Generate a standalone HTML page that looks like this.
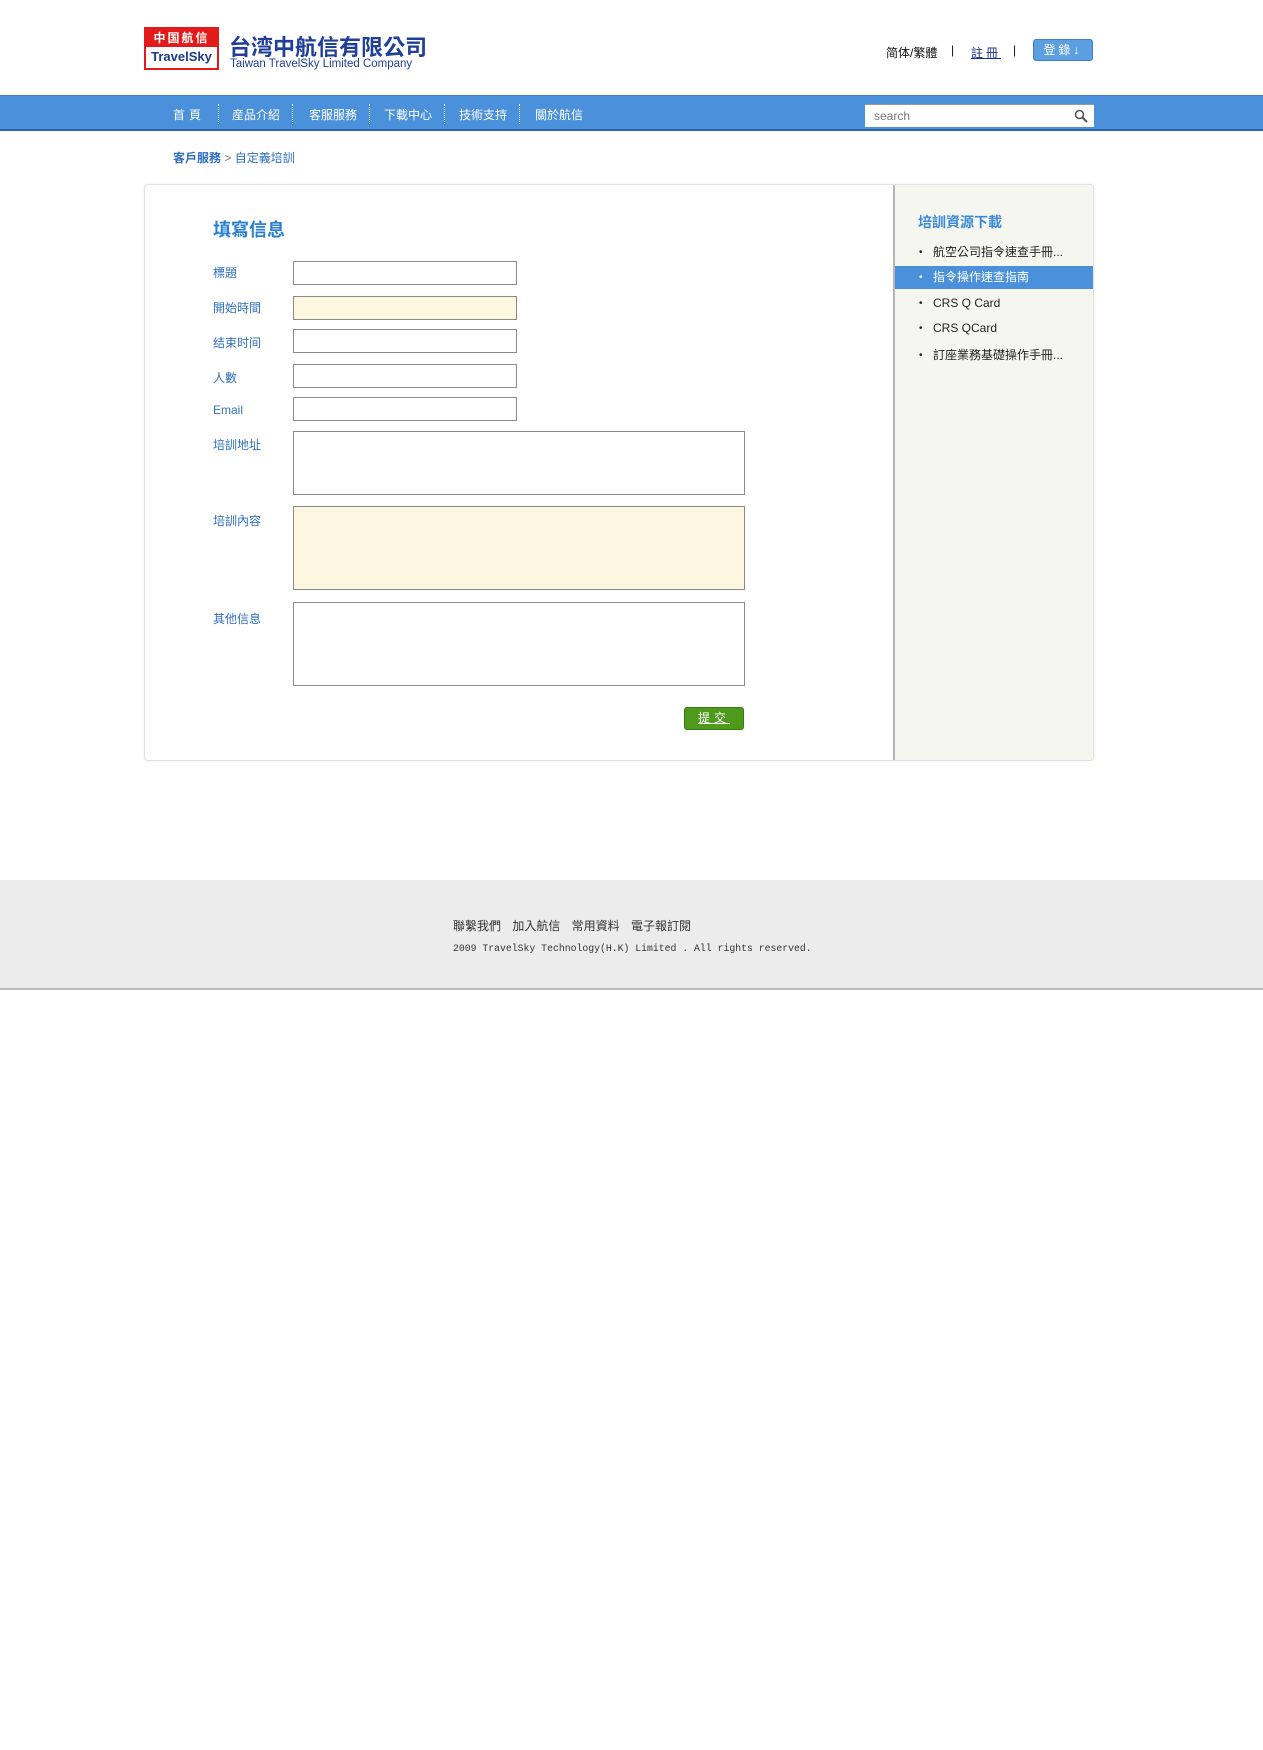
<!DOCTYPE html>
<html><head><meta charset="utf-8">
<style>
*{margin:0;padding:0;box-sizing:border-box}
body{width:1263px;height:1750px;background:#fff;font-family:"Liberation Sans","Noto Sans CJK TC",sans-serif;position:relative;overflow:hidden}
.a{position:absolute;white-space:nowrap}
.nav{position:absolute;left:0;top:95px;width:1263px;height:36px;background:#4a90da;border-bottom:2px solid #2a62a8;border-top:1px solid #3b7fcc}
.nav span{position:absolute;top:10px;color:#fff;font-size:12px}
.dv{position:absolute;top:8px;height:20px;border-left:1px dotted #e6f0fb}
.inp{position:absolute;border:1px solid #8a8a8a;background:#fff}
.lab{position:absolute;left:213px;color:#2f6fbf;font-size:12px}
.side li{list-style:none;position:absolute;left:895px;width:198px;height:23px;font-size:12px;color:#222;line-height:23px;padding-left:38px}
.side li:before{content:"•";position:absolute;left:24px;font-size:10px}
</style></head><body>
<div class="a" style="left:144px;top:27px;width:75px;height:43px;border:2px solid #e21a1a;background:#fff">
 <div style="background:#e21a1a;height:18px;color:#fff;font-size:12px;font-weight:bold;text-align:center;line-height:18px;letter-spacing:2px">中国航信</div>
 <div style="color:#1a3a8a;font-size:13px;font-weight:bold;text-align:center;line-height:20px">TravelSky</div>
</div>
<div class="a" style="left:229px;top:30px;font-size:22px;font-weight:bold;color:#1f3f9a">台湾中航信有限公司</div>
<div class="a" style="left:230px;top:58px;font-size:11.5px;color:#1f3f9a">Taiwan TravelSky Limited Company</div>
<div class="a" style="left:886px;top:44px;font-size:12px;color:#111">简体/繁體</div>
<div class="a" style="left:951px;top:43px;font-size:12px;color:#111">|</div>
<div class="a" style="left:971px;top:44px;font-size:12px;color:#1a2f8a;text-decoration:underline;letter-spacing:3px">註冊</div>
<div class="a" style="left:1013px;top:43px;font-size:12px;color:#111">|</div>
<div class="a" style="left:1033px;top:39px;width:60px;height:22px;background:#5b9fe0;border:1px solid #3f7fc6;border-radius:3px;color:#fff;font-size:12px;text-align:center;line-height:20px;letter-spacing:3px">登錄↓</div>
<div class="nav">
 <span style="left:173px;letter-spacing:4px">首頁</span><i class="dv" style="left:218px"></i>
 <span style="left:232px">産品介紹</span><i class="dv" style="left:292px"></i>
 <span style="left:309px">客服服務</span><i class="dv" style="left:369px"></i>
 <span style="left:384px">下載中心</span><i class="dv" style="left:444px"></i>
 <span style="left:459px">技術支持</span><i class="dv" style="left:519px"></i>
 <span style="left:535px">關於航信</span>
 <div style="position:absolute;left:865px;top:8px;width:229px;height:23px;background:#fff;border-top:1px solid #999"><span style="left:9px;top:4px;color:#777;font-size:12px">search</span>
 <svg style="position:absolute;right:6px;top:4px" width="14" height="14"><circle cx="5.5" cy="5.5" r="4" fill="none" stroke="#555" stroke-width="1.6"/><path d="M8.5 8.5L13 13" stroke="#555" stroke-width="2"/></svg></div>
</div>
<div class="a" style="left:173px;top:149px;font-size:12px;color:#2f6fbf"><b>客戶服務</b> <span style="color:#777">&gt;</span> 自定義培訓</div>
<div class="a" style="left:144px;top:184px;width:950px;height:577px;border:1px solid #e2e2e2;border-radius:4px;background:#fff;box-shadow:0 0 3px #eee"></div>
<div class="a" style="left:893px;top:185px;width:200px;height:575px;background:#f6f6f1;border-left:2px solid #b5b5b5;border-radius:0 4px 4px 0"></div>
<div class="a" style="left:213px;top:216px;font-size:18px;font-weight:bold;color:#2a7fd0">填寫信息</div>
<div class="lab" style="top:264px">標題</div>
<div class="lab" style="top:299px">開始時間</div>
<div class="lab" style="top:334px">结束时间</div>
<div class="lab" style="top:369px">人數</div>
<div class="lab" style="top:403px">Email</div>
<div class="lab" style="top:436px">培訓地址</div>
<div class="lab" style="top:512px">培訓內容</div>
<div class="lab" style="top:610px">其他信息</div>
<div class="inp" style="left:293px;top:261px;width:224px;height:24px"></div>
<div class="inp" style="left:293px;top:296px;width:224px;height:24px;background:#fdf7e0"></div>
<div class="inp" style="left:293px;top:329px;width:224px;height:24px"></div>
<div class="inp" style="left:293px;top:364px;width:224px;height:24px"></div>
<div class="inp" style="left:293px;top:397px;width:224px;height:24px"></div>
<div class="inp" style="left:293px;top:431px;width:452px;height:64px"></div>
<div class="inp" style="left:293px;top:506px;width:452px;height:84px;background:#fdf7e0"></div>
<div class="inp" style="left:293px;top:602px;width:452px;height:84px"></div>
<div class="a" style="left:684px;top:707px;width:60px;height:23px;background:#4e9a1c;border:1px solid #3a7a10;border-radius:3px;color:#fff;font-size:12px;text-align:center;line-height:21px;text-decoration:underline;letter-spacing:4px">提交</div>
<div class="a" style="left:918px;top:212px;font-size:14px;font-weight:bold;color:#3a8ad8">培訓資源下載</div>
<ul class="side">
 <li style="top:241px">航空公司指令速查手冊...</li>
 <li style="top:266px;background:#4a90da;color:#fff">指令操作速查指南</li>
 <li style="top:292px">CRS Q Card</li>
 <li style="top:317px">CRS QCard</li>
 <li style="top:344px">訂座業務基礎操作手冊...</li>
</ul>
<div class="a" style="left:0;top:880px;width:1263px;height:110px;background:#ececec;border-bottom:2px solid #bcbcbc"></div>
<div class="a" style="left:453px;top:917px;font-size:12px;color:#333;word-spacing:8px">聯繫我們 加入航信 常用資料 電子報訂閱</div>
<div class="a" style="left:453px;top:943px;font-size:9.8px;color:#333;font-family:'Liberation Mono',monospace">2009 TravelSky Technology(H.K) Limited . All rights reserved.</div>
</body></html>
